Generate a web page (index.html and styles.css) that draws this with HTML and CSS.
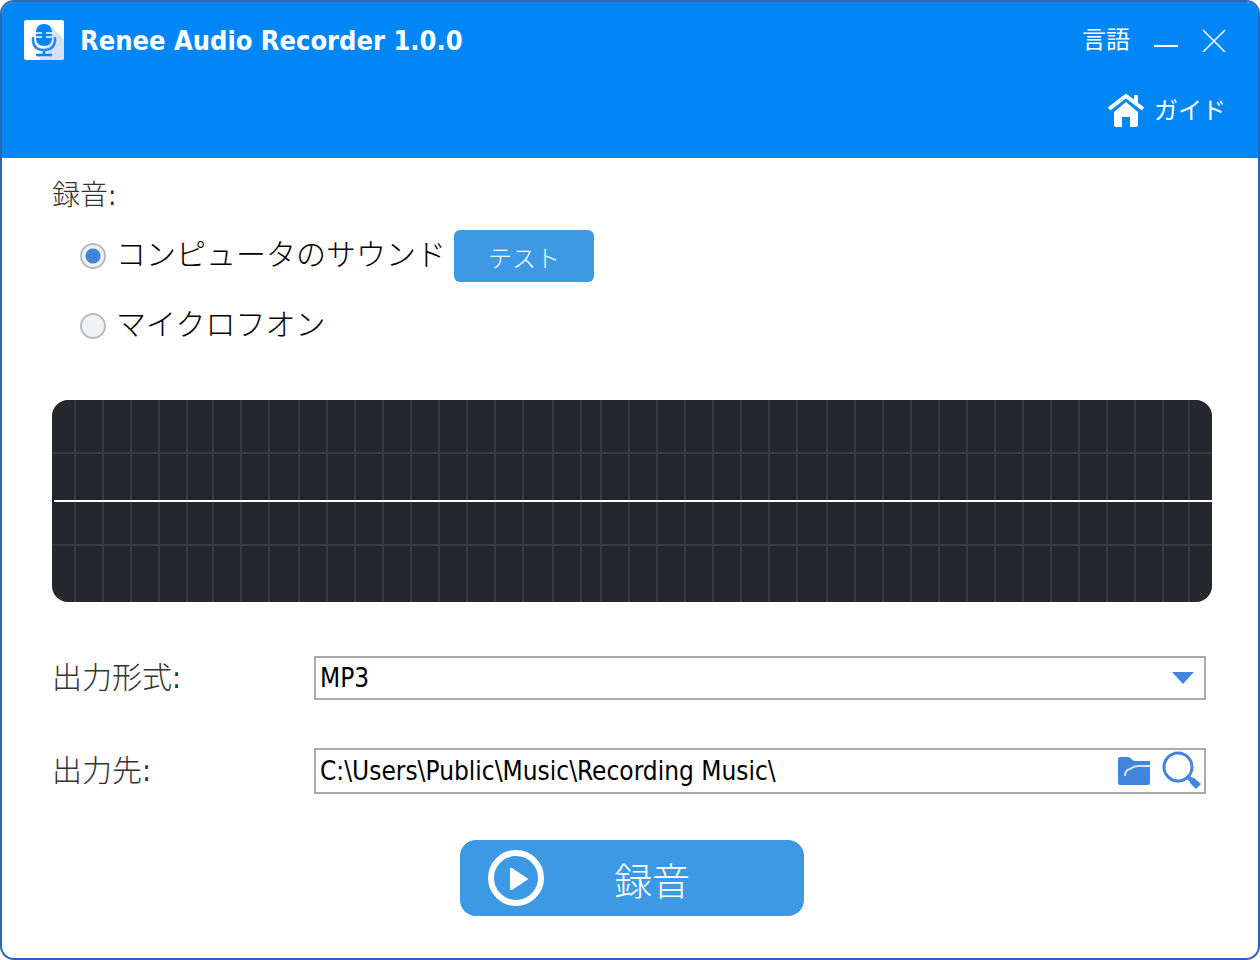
FILE: index.html
```html
<!DOCTYPE html>
<html lang="ja">
<head>
    <meta charset="UTF-8">
    <meta name="viewport" content="width=device-width, initial-scale=1.0">
    <title>Renee Audio Recorder 1.0.0</title>
    <link rel="stylesheet" href="styles.css">
</head>
<body>

    <div class="window">
        <header class="header">
            <div class="title-bar">
                <svg class="logo" viewBox="0 0 40 40" aria-hidden="true">
                    <rect width="40" height="40" rx="2" fill="#fff"/>
                    <path d="M28 7 L40 19 V38 Q40 40 38 40 H17 L12 35 L20 30 Z" fill="#d5e3f6"/>
                    <path d="M12 11 Q13 4 20 4 Q27 4 28 11 V19 Q27 26 20 26 Q13 26 12 19 Z" fill="#0187f5"/>
                    <path d="M12 13 H18 M22 13 H28 M12 17 H18 M22 17 H28" stroke="#fff" stroke-width="1.5"/>
                    <path d="M9 17 V21 Q10 30 20 30 Q30 30 31 21 V17" fill="none" stroke="#2e8ae0" stroke-width="2.5"/>
                    <path d="M20 30 V35 M12 35 H28" fill="none" stroke="#0187f5" stroke-width="2.5"/>
                </svg>
                <h1 class="title">Renee Audio Recorder 1.0.0</h1>
                <button type="button" class="header-btn">言語</button>
                <button type="button" class="header-btn minimize" aria-label="最小化">
                    <svg width="24" height="24" viewBox="0 0 24 24"><path d="M0 18 H24" stroke="#fff" stroke-width="2"/></svg>
                </button>
                <button type="button" class="header-btn close" aria-label="閉じる">
                    <svg width="24" height="24" viewBox="0 0 24 24"><path d="M1 2 L23 24 M23 2 L1 24" stroke="#fff" stroke-width="1.5"/></svg>
                </button>
            </div>
            <a href="#" class="guide">
                <svg width="36" height="34" viewBox="0 0 36 34" aria-hidden="true">
                    <path d="M1 15 L18 2 L35 15" fill="none" stroke="#fff" stroke-width="4"/>
                    <path d="M26 1 H30 V11 L26 8 Z" fill="#fff"/>
                    <path d="M18 8 L30 18 V31 Q30 33 28 33 H22 V23 H14 V33 H8 Q6 33 6 31 V18 Z" fill="#fff"/>
                </svg>
                <span>ガイド</span>
            </a>
        </header>

        <form class="content">
            <fieldset class="source">
                <legend>録音:</legend>
                <div class="source-row">
                    <input type="radio" name="source" id="computer" checked>
                    <label for="computer">コンピュータのサウンド</label>
                    <button type="button" class="test-btn">テスト</button>
                </div>
                <div class="source-row">
                    <input type="radio" name="source" id="microphone">
                    <label for="microphone">マイクロフオン</label>
                </div>
            </fieldset>

            <div class="wave">
                <svg viewBox="0 0 1160 202" preserveAspectRatio="none" aria-hidden="true">
                    <path class="grid-line" d="M23 0V202M51 0V202M79 0V202M107 0V202M135 0V202M161 0V202M189 0V202M217 0V202M247 0V202M275 0V202M303 0V202M331 0V202M359 0V202M387 0V202M415 0V202M443 0V202M471 0V202M501 0V202M529 0V202M549 0V202M577 0V202M605 0V202M633 0V202M661 0V202M689 0V202M717 0V202M745 0V202M775 0V202M803 0V202M831 0V202M859 0V202M887 0V202M915 0V202M943 0V202M971 0V202M999 0V202M1027 0V202M1055 0V202M1083 0V202M1111 0V202M1137 0V202"/>
                    <path class="grid-line" d="M0 53H1160M0 145H1160"/>
                    <path class="signal" d="M2 101H1160"/>
                </svg>
            </div>

            <div class="field">
                <label for="format">出力形式:</label>
                <div class="box select-box">
                    <select id="format">
                        <option>MP3</option>
                    </select>
                    <svg class="arrow" width="22" height="12" viewBox="0 0 22 12" aria-hidden="true"><path d="M0 0 H22 L11 12 Z" fill="#4285dc"/></svg>
                </div>
            </div>

            <div class="field">
                <label for="path">出力先:</label>
                <div class="box path-box">
                    <input type="text" id="path" value="C:\Users\Public\Music\Recording Music\">
                    <button type="button" class="icon-btn" aria-label="フォルダ">
                        <svg width="32" height="28" viewBox="0 0 32 28">
                            <path d="M0 2 Q0 0 2 0 H11 L16 4 H32 V26 Q32 28 30 28 H2 Q0 28 0 26 Z" fill="#4285dc"/>
                            <path d="M7 19 Q7 13 12 12 Q16 9 20 9 H32" fill="none" stroke="#d5e3f6" stroke-width="2"/>
                        </svg>
                    </button>
                    <button type="button" class="icon-btn" aria-label="検索">
                        <svg width="40" height="40" viewBox="0 0 40 40">
                            <circle cx="16" cy="16" r="14" fill="none" stroke="#4285dc" stroke-width="3"/>
                            <path d="M26 26 L30 30" stroke="#4285dc" stroke-width="4"/>
                            <path d="M28 26 L32 27 L39 33 L34 38 L28 32 Z" fill="#4285dc"/>
                        </svg>
                    </button>
                </div>
            </div>

            <button type="button" class="record-btn">
                <svg width="56" height="56" viewBox="0 0 56 56" aria-hidden="true">
                    <circle cx="28" cy="28" r="25" fill="none" stroke="#fff" stroke-width="6"/>
                    <path d="M22 19 Q22 17 24 18 L39 28 Q41 29 39 30 L24 40 Q22 41 22 39 Z" fill="#fff"/>
                </svg>
                <span>録音</span>
            </button>
        </form>
    </div>

</body>
</html>
```
FILE: styles.css
```css
/* Basic Reset */
* {
    margin: 0;
    padding: 0;
    box-sizing: border-box;
}

body {
    font-family: "DejaVu Sans Condensed", "Noto Sans CJK JP", sans-serif;
    background-color: #fff;
    color: #333;
}

button,
input,
select {
    font-family: inherit;
    border: none;
    background: none;
}

button {
    cursor: pointer;
}

svg {
    display: block;
    flex-shrink: 0;
}

/* Window frame */
.window {
    min-height: 100vh;
    border: 2px solid #2a66b5;
    border-radius: 14px;
    overflow: hidden;
}

/* Header */
.header {
    height: 156px;
    padding: 18px 32px 0 22px;
    background-color: #0187f5;
    color: #fff;
}

.title-bar {
    display: flex;
    align-items: center;
    height: 40px;
}

.logo {
    width: 40px;
    height: 40px;
    margin-right: 16px;
}

.title {
    flex: 1;
    font-size: 27px;
    font-weight: bold;
}

.header-btn {
    color: #fff;
    font-size: 24px;
    line-height: 40px;
}

.header-btn + .header-btn {
    margin-left: 24px;
}

.guide {
    display: flex;
    align-items: center;
    justify-content: flex-end;
    gap: 10px;
    margin-top: 31px;
    color: #fff;
    font-size: 24px;
    line-height: 40px;
    text-decoration: none;
}

/* Main form */
.content {
    padding: 16px 46px 40px 50px;
}

.source {
    border: none;
}

.source legend {
    font-size: 28px;
    font-weight: 300;
    line-height: 44px;
    margin-bottom: 12px;
}

.source-row {
    display: flex;
    align-items: center;
    height: 52px;
    margin-bottom: 18px;
    padding-left: 28px;
    color: #000;
    font-size: 30px;
    font-weight: 300;
}

.source-row label {
    margin-left: 10px;
    padding-bottom: 8px;
}

.source-row input {
    appearance: none;
    width: 26px;
    height: 26px;
    border: 2px solid #bbb;
    border-radius: 50%;
    background-color: #f0f2f4;
}

.source-row input:checked {
    background-image: radial-gradient(circle, #4285dc 7px, #f0f2f4 8px);
}

.test-btn {
    width: 140px;
    height: 52px;
    margin-left: 8px;
    border-radius: 6px;
    background-color: #3c99e3;
    color: #fff;
    font-size: 24px;
    font-weight: 300;
}

/* Waveform */
.wave {
    height: 202px;
    margin: 30px 0 54px;
    border-radius: 16px;
    overflow: hidden;
    background-color: #26272c;
}

.wave svg {
    width: 100%;
    height: 100%;
}

.grid-line {
    stroke: #3a3b40;
    stroke-width: 2;
}

.signal {
    stroke: #fff;
    stroke-width: 2;
}

/* Output fields */
.field {
    display: grid;
    grid-template-columns: 262px 1fr;
    align-items: center;
    padding-right: 6px;
}

.field + .field {
    margin-top: 48px;
}

.field label {
    font-size: 30px;
    font-weight: 300;
    line-height: 44px;
}

.box {
    height: 46px;
    border: 2px solid #aaa;
    background-color: #fff;
}

.select-box {
    display: grid;
    align-items: center;
    height: 44px;
}

.select-box select,
.select-box .arrow {
    grid-area: 1 / 1;
}

.select-box select {
    appearance: none;
    width: 100%;
    height: 40px;
    padding-left: 4px;
    color: #000;
    font-size: 26px;
}

.select-box .arrow {
    justify-self: end;
    margin-right: 10px;
    pointer-events: none;
}

.path-box {
    display: flex;
    align-items: center;
}

.path-box input {
    flex: 1;
    min-width: 0;
    height: 42px;
    padding-left: 4px;
    color: #000;
    font-size: 26px;
    outline: none;
}

.icon-btn {
    margin-left: 12px;
}

.icon-btn:last-child {
    margin-right: 2px;
}

/* Record button */
.record-btn {
    display: flex;
    align-items: center;
    gap: 70px;
    width: 344px;
    height: 76px;
    margin: 46px auto 0;
    padding: 0 28px;
    border-radius: 16px;
    background-color: #3c99e3;
    color: #fff;
    font-size: 38px;
    font-weight: 300;
}

.test-btn:hover,
.record-btn:hover {
    background-color: #2f8cd6;
}
```
